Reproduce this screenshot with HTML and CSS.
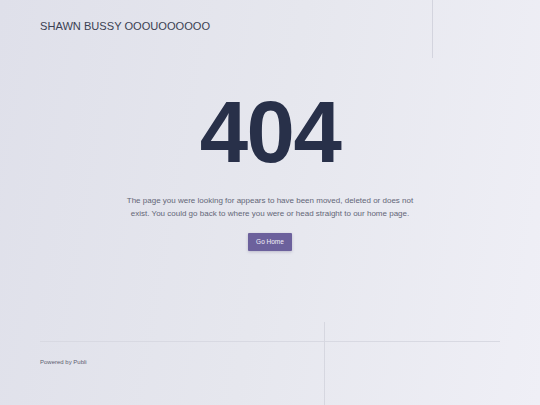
FILE: index.html
```html
<!DOCTYPE html>
<html>
<head>
<meta charset="utf-8">
<link rel="stylesheet" href="styles.css">
</head>
<body>
<div class="page">
  <div class="deco-top"></div>
  <div class="deco-bottom"></div>
  <header class="header">
    <div class="brand">SHAWN BUSSY OOOUOOOOOO</div>
  </header>
  <main class="main">
    <h1 class="code">404</h1>
    <p class="message">The page you were looking for appears to have been moved, deleted or does not exist. You could go back to where you were or head straight to our home page.</p>
    <a class="btn" href="#">Go Home</a>
  </main>
  <footer class="footer">
    <div class="footer-inner">Powered by Publi</div>
  </footer>
</div>
</body>
</html>
```

FILE: styles.css
```css
html, body {
  margin: 0;
  padding: 0;
}
body {
  font-family: "Liberation Sans", Arial, sans-serif;
  width: 540px;
  height: 405px;
  overflow: hidden;
}
.page {
  position: relative;
  width: 540px;
  height: 405px;
  background: linear-gradient(100deg, #dfe0ea 0%, #e6e7ee 50%, #efeff6 100%);
  display: flex;
  flex-direction: column;
  box-sizing: border-box;
  padding: 0 40px;
}
.deco-top {
  position: absolute;
  left: 432px;
  top: 0;
  width: 1px;
  height: 58px;
  background: #d3d4de;
}
.deco-bottom {
  position: absolute;
  left: 324px;
  top: 322px;
  width: 1px;
  height: 83px;
  background: #d6d7e0;
}
.header {
  height: 52px;
  display: flex;
  align-items: center;
}
.brand {
  font-size: 11.1px;
  color: #3b3f52;
}
.main {
  display: flex;
  flex-direction: column;
  align-items: center;
  padding-top: 32px;
}
.code {
  margin: 0;
  font-size: 87px;
  font-weight: 700;
  line-height: 96px;
  color: #283049;
  letter-spacing: -1.5px;
}
.message {
  margin: 14px 0 0;
  width: 300px;
  text-align: center;
  font-size: 8px;
  line-height: 13px;
  color: #636677;
}
.btn {
  margin-top: 13px;
  display: inline-block;
  background: #6c619c;
  color: #f2f0fa;
  font-size: 6.5px;
  line-height: 18px;
  padding: 0 8px;
  text-decoration: none;
  border-radius: 1px;
  box-shadow: 0 1px 3px rgba(60, 50, 100, 0.25);
}
.footer {
  margin-top: auto;
  height: 63px;
  border-top: 1px solid #d8d9e2;
}
.footer-inner {
  padding-top: 17px;
  font-size: 6px;
  color: #5d6070;
}
```
